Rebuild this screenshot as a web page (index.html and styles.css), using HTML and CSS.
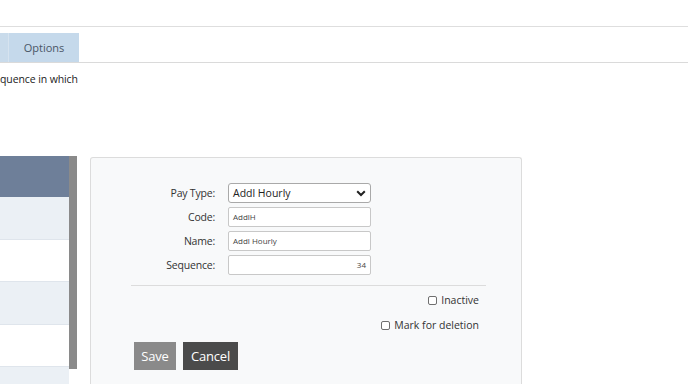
FILE: index.html
```html
<!DOCTYPE html>
<html>
<head>
<meta charset="utf-8">
<link rel="stylesheet" href="styles.css">
</head>
<body>
<div class="topbar"></div>
<div class="tabs">
  <div class="tab tab-prev"></div>
  <div class="tab">Options</div>
</div>
<p class="intro">quence in which</p>
<div class="main">
  <div class="grid">
    <div class="grid-rows">
      <div class="grid-head"></div>
      <div class="row alt"></div>
      <div class="row"></div>
      <div class="row alt"></div>
      <div class="row"></div>
      <div class="row alt last"></div>
    </div>
    <div class="scrollbar"></div>
  </div>
  <div class="panel">
    <div class="form">
      <label class="lbl">Pay Type:</label>
      <div class="select">
        <span>Addl Hourly</span>
        <svg width="10" height="7" viewBox="0 0 10 7"><path d="M1.2 1.2 L5 5 L8.8 1.2" fill="none" stroke="#222" stroke-width="2"/></svg>
      </div>
      <label class="lbl">Code:</label>
      <div class="input">AddlH</div>
      <label class="lbl">Name:</label>
      <div class="input">Addl Hourly</div>
      <label class="lbl">Sequence:</label>
      <div class="input num">34</div>
    </div>
    <hr class="sep">
    <div class="checks">
      <label class="check"><span class="box"></span>Inactive</label>
      <label class="check"><span class="box"></span>Mark for deletion</label>
    </div>
    <div class="buttons">
      <button class="btn save">Save</button>
      <button class="btn cancel">Cancel</button>
    </div>
  </div>
</div>
</body>
</html>
```
FILE: styles.css
```css
* { box-sizing: border-box; }
html, body { margin: 0; padding: 0; background: #fff; overflow: hidden; }
body {
  font-family: "Open Sans", "Noto Sans", sans-serif;
  color: #333;
  width: 688px;
  height: 384px;
}
.topbar {
  height: 27px;
  border-bottom: 1px solid #dedede;
}
.tabs {
  margin-top: 6px;
  height: 30px;
  display: flex;
  border-bottom: 1px solid #dadada;
}
.tab {
  background: #c5d9eb;
  height: 29px;
  width: 70px;
  font-size: 11px;
  line-height: 29px;
  text-align: center;
  color: #4a5666;
}
.tab-prev {
  width: 9px;
  border-right: 1px solid #d6e3ef;
  background: #c9dbeb;
}
.intro {
  margin: 9px 0 0 0;
  font-size: 10.5px;
  line-height: 14px;
  color: #222;
  letter-spacing: -0.1px;
}
.main {
  margin-top: 70px;
  display: flex;
  align-items: flex-start;
}
.grid {
  width: 77px;
  display: flex;
  height: 228px;
  flex: none;
}
.grid-rows {
  width: 69px;
  flex: none;
}
.grid-head {
  height: 41px;
  background: #6e7f99;
}
.row {
  height: 42.6px;
  background: #fff;
  border-bottom: 1px solid #dfe5ec;
}
.row.alt { background: #ebf0f5; }
.row.last { height: 17px; border-bottom: 0; }
.scrollbar {
  width: 8px;
  height: 213px;
  background: #8a8a8a;
  flex: none;
}
.panel {
  margin-left: 13px;
  margin-top: 1px;
  width: 432px;
  height: 227px;
  background: #f8f9fa;
  border: 1px solid #dcdcdc;
  border-bottom: 0;
  border-radius: 3px 3px 0 0;
  padding-top: 25px;
  flex: none;
}
.form {
  display: grid;
  grid-template-columns: 84px 143px;
  column-gap: 13px;
  row-gap: 4px;
  margin-left: 40px;
}
.lbl {
  font-size: 10.5px;
  line-height: 20px;
  text-align: right;
  color: #333;
  letter-spacing: -0.2px;
}
.select, .input {
  height: 20px;
  background: #fff;
  border: 1px solid #c8c8c8;
  border-radius: 2px;
}
.select {
  border-radius: 3px;
  border-color: #a9a9a9;
  display: flex;
  align-items: center;
  justify-content: space-between;
  padding: 0 4px 0 4px;
  font-size: 10.5px;
  color: #222;
}
.input {
  font-size: 8px;
  line-height: 18px;
  padding: 0 4px;
  color: #444;
}
.input.num { text-align: right; }
.sep {
  margin: 10px 35px 0 40px;
  border: 0;
  border-top: 1px solid #dcdcdc;
  height: 0;
}
.checks {
  display: flex;
  flex-direction: column;
  align-items: flex-end;
  padding-right: 42px;
  margin-top: 6px;
  gap: 9px;
}
.check {
  display: flex;
  align-items: center;
  font-size: 10.5px;
  line-height: 16px;
  color: #333;
}
.box {
  width: 9px;
  height: 9px;
  border: 1px solid #6f6f6f;
  border-radius: 2px;
  background: #fff;
  margin-right: 4px;
}
.buttons {
  display: flex;
  gap: 7px;
  margin-left: 43px;
  margin-top: 9px;
}
.btn {
  height: 28px;
  border: 0;
  border-radius: 0;
  color: #fff;
  font-family: "Open Sans", "Noto Sans", sans-serif;
  font-size: 13px;
  padding: 0;
  letter-spacing: -0.2px;
}
.save { background: #8a8a8a; width: 42px; }
.cancel { background: #4b4b4b; width: 55px; }
```
